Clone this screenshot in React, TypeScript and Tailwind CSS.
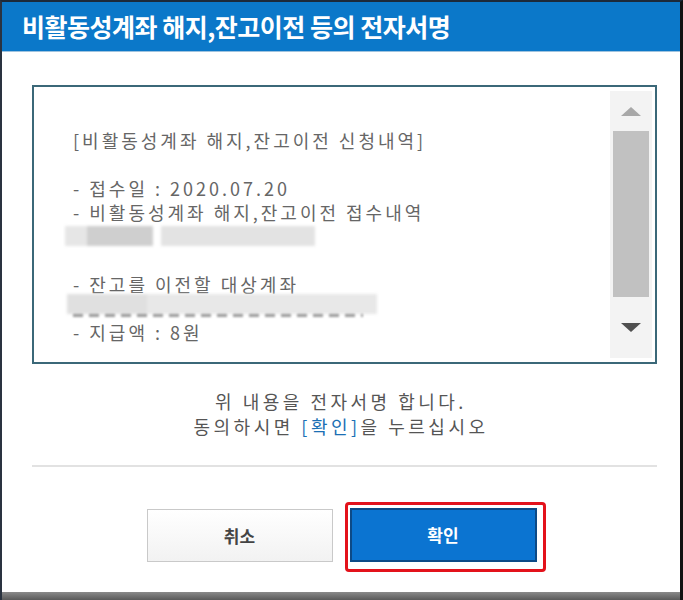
import React from "react";

const font = { fontFamily: '"Noto Sans CJK KR", "Noto Sans", sans-serif' };

function Blur({ parts }: { parts: { w: number; c: string; gap?: number }[] }) {
  return (
    <div className="flex h-[24px] items-center blur-[1.5px]">
      {parts.map((p, i) => (
        <div
          key={i}
          className="h-[20px]"
          style={{ width: p.w, background: p.c, marginLeft: p.gap ?? 0 }}
        />
      ))}
    </div>
  );
}

function Scrollbar() {
  return (
    <div className="my-[4px] mr-[3px] flex w-[42px] flex-col items-center bg-[#f3f3f3]">
      <div className="flex h-[40px] w-full items-center justify-center">
        <div className="h-0 w-0 border-x-[10px] border-b-[9px] border-x-transparent border-b-[#a8a8a8]" />
      </div>
      <div className="h-[166px] w-[36px] bg-[#c1c1c1]" />
      <div className="flex flex-1 w-full items-center justify-center">
        <div className="h-0 w-0 border-x-[10px] border-t-[9px] border-x-transparent border-t-[#505050]" />
      </div>
    </div>
  );
}

export default function App() {
  return (
    <div
      className="flex h-[600px] w-[683px] flex-col border-l-[2px] border-r-[3px] border-t-[2px] border-l-[#2a3340] border-r-[#111] border-t-[#1c2a3a] bg-white"
      style={font}
    >
      {/* HEADER */}
      <div className="flex h-[50px] items-center border-b border-b-[#9fc3de] bg-[#0b78c9] pl-[20px]">
        <h1 className="text-[25px] font-bold tracking-[-0.5px] text-white">
          비활동성계좌 해지,잔고이전 등의 전자서명
        </h1>
      </div>

      {/* CONTENT BOX */}
      <div className="ml-[30px] mr-[23px] mt-[33px] flex h-[279px] border-[2px] border-[#3b6878]">
        <div className="flex-1 overflow-hidden pl-[39px] pt-[41px] text-[18px] leading-[24px] tracking-[3px] text-[#666]">
          <div>[비활동성계좌 해지,잔고이전 신청내역]</div>
          <div className="h-[24px]" />
          <div>- 접수일 : 2020.07.20</div>
          <div>- 비활동성계좌 해지,잔고이전 접수내역</div>
          <div className="-ml-[8px]">
            <Blur
              parts={[
                { w: 22, c: "#e6e6e6" },
                { w: 66, c: "#cfcfcf" },
                { w: 154, c: "#e3e3e3", gap: 8 },
              ]}
            />
          </div>
          <div className="h-[24px]" />
          <div>- 잔고를 이전할 대상계좌</div>
          {/* masked account line */}
          <div className="relative h-[24px]">
            <div className="absolute left-0 top-[16px] h-[5px] w-[290px] bg-[repeating-linear-gradient(90deg,#9a9a9a_0_10px,transparent_10px_16px)] blur-[1px]" />
            <div className="absolute -left-[6px] -top-[4px]">
              <Blur
                parts={[
                  { w: 80, c: "#e0e0e0" },
                  { w: 230, c: "#e8e8e8" },
                ]}
              />
            </div>
          </div>
          <div>- 지급액 : 8원</div>
        </div>
        <Scrollbar />
      </div>

      {/* NOTICE */}
      <div className="mt-[25px] flex flex-col items-center text-[18px] leading-[25px] tracking-[3.5px] text-[#555]">
        <p>위 내용을 전자서명 합니다.</p>
        <p>
          동의하시면 <span className="text-[#1b6fb4]">[확인]</span>을 누르십시오
        </p>
      </div>

      <div className="ml-[30px] mr-[23px] mt-[26px] h-[2px] bg-[#e2e2e2]" />

      {/* BUTTONS */}
      <div className="mt-[35px] flex items-start justify-center gap-[12px] pl-[10px]">
        <button className="mt-[7px] h-[53px] w-[186px] border border-[#c9c9c9] bg-gradient-to-b from-white to-[#f2f2f2] text-[17px] font-bold text-[#444]">
          취소
        </button>
        <div className="rounded-[4px] border-[3px] border-[#e3121b] pb-[7px] pl-[2px] pr-[6px] pt-[3px]">
          <button className="h-[54px] w-[187px] border-[2px] border-[#0d4a86] bg-[#0b74d1] text-[17px] font-bold text-white">
            확인
          </button>
        </div>
      </div>

      <div className="flex-1" />
      <div className="h-[8px] bg-gradient-to-b from-[#8a8a8a] to-[#5a5a5a]" />
    </div>
  );
}
